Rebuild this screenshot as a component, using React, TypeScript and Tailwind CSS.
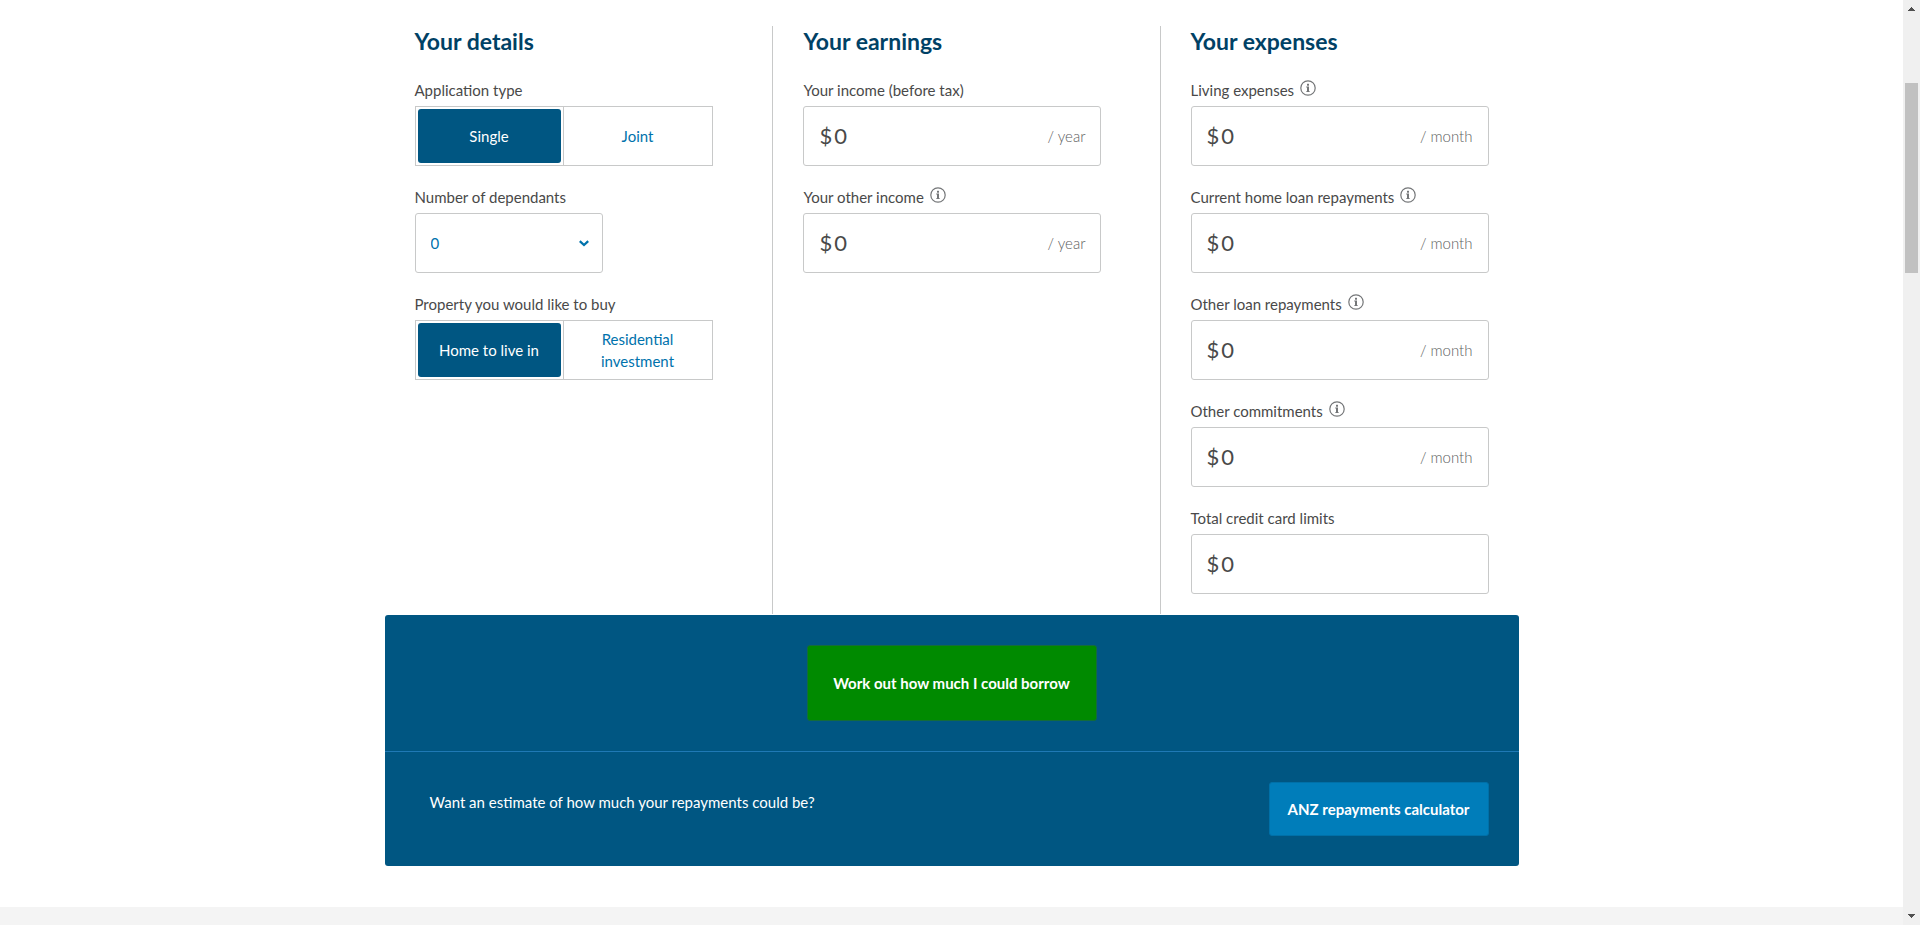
import { useState } from "react";
import type { ReactNode } from "react";

function InfoIcon() {
  return (
    <svg viewBox="0 0 16 16" className="size-4" fill="none" aria-hidden="true">
      <circle cx="8" cy="8" r="7.2" stroke="#747678" strokeWidth="1.2" />
      <rect x="7" y="3.8" width="2" height="1.9" fill="#747678" />
      <path d="M6.2 6.6H9v4.6h.8v.8H6.2v-.8H7V7.4h-.8z" fill="#747678" />
    </svg>
  );
}

function Column({ title, divided, children }: { title: string; divided?: boolean; children: ReactNode }) {
  return (
    <section className={divided ? "border-l border-[#c8c9c9] px-[30px] pb-5" : "px-[30px] pb-5"}>
      <h2 className="mb-[22px] text-[23px] leading-[30px] font-bold text-[#004165]">{title}</h2>
      <div className="flex max-w-[298px] flex-col gap-[19px]">{children}</div>
    </section>
  );
}

function MoneyField({ id, label, unit, info }: { id: string; label: string; unit?: string; info?: boolean }) {
  const [value, setValue] = useState("0");
  return (
    <div>
      <div className="mb-1 flex h-6 items-center gap-1.5">
        <label htmlFor={id}>{label}</label>
        {info && (
          <button type="button" aria-label={"About " + label} className="pb-1">
            <InfoIcon />
          </button>
        )}
      </div>
      <div className="flex h-[60px] items-center rounded-[3px] border border-[#c8c9c9] px-[15px]">
        <span className="mr-0.5 text-[22px]">$</span>
        <input
          id={id}
          inputMode="numeric"
          value={value}
          onChange={(e) => setValue(e.target.value)}
          className="min-w-0 flex-1 text-[22px] outline-none"
        />
        {unit && <span className="font-light text-[#5c5e60]">/ {unit}</span>}
      </div>
    </div>
  );
}

function Segmented({ name, label, options }: { name: string; label: string; options: string[] }) {
  const [picked, setPicked] = useState(options[0]);
  return (
    <div role="radiogroup" aria-labelledby={name + "-label"}>
      <div id={name + "-label"} className="mb-1 h-6 leading-6">
        {label}
      </div>
      <div className="grid min-h-[60px] grid-cols-2 divide-x divide-[#c8c9c9] border border-[#c8c9c9]">
        {options.map((option) => (
          <label key={option} className="relative flex cursor-pointer p-0.5">
            <input
              type="radio"
              name={name}
              checked={picked === option}
              onChange={() => setPicked(option)}
              className="peer sr-only"
            />
            <span className="flex flex-1 items-center justify-center rounded-[3px] px-4 text-center leading-[22px] text-[#0072ac] peer-checked:bg-[#005682] peer-checked:text-white">
              {option}
            </span>
          </label>
        ))}
      </div>
    </div>
  );
}

function Dependants() {
  return (
    <div>
      <label htmlFor="dependants" className="mb-1 block h-6 leading-6">
        Number of dependants
      </label>
      <div className="grid h-[60px] w-[188px] items-center rounded-[3px] border border-[#c8c9c9]">
        <select
          id="dependants"
          defaultValue="0"
          className="col-start-1 row-start-1 h-full appearance-none px-[15px] text-[#0072ac] outline-none"
        >
          <option>0</option>
          <option>1</option>
          <option>2</option>
          <option>3</option>
          <option>4</option>
        </select>
        <svg
          viewBox="0 0 10 7"
          className="pointer-events-none col-start-1 row-start-1 mr-[13px] h-[7px] w-2.5 justify-self-end"
          fill="none"
          stroke="#0072ac"
          strokeWidth="2.2"
          aria-hidden="true"
        >
          <path d="M.8 1.1 5 5.1l4.2-4" />
        </svg>
      </div>
    </div>
  );
}

function ScrollRail() {
  return (
    <div aria-hidden="true" className="sticky top-0 flex h-screen w-[17px] shrink-0 flex-col items-center bg-[#f0f0f0]">
      <svg viewBox="0 0 7 4" className="mt-[7px] h-1 w-[7px]" fill="#505050" shapeRendering="crispEdges">
        <path d="M3 0h1v1h1v1h1v1h1v1H0V3h1V2h1V1h1z" />
      </svg>
      <div className="mt-[72px] h-[190px] w-[13px] bg-[#c1c1c1]" />
      <svg viewBox="0 0 7 4" className="mt-auto mb-[7px] h-1 w-[7px]" fill="#505050" shapeRendering="crispEdges">
        <path d="M0 0h7v1H6v1H5v1H4v1H3V3H2V2H1V1H0z" />
      </svg>
    </div>
  );
}

export default function App() {
  return (
    <div className="flex bg-white font-['Lato',sans-serif] text-[15px] leading-6 text-[#494949]">
      <div className="flex min-h-screen flex-1 flex-col pt-[26px]">
        <main className="mx-auto mb-[41px] w-full max-w-[1134px]">
          <form onSubmit={(e) => e.preventDefault()}>
            <div className="mb-px grid grid-cols-[389fr_388fr_357fr]">
              <Column title="Your details">
                <Segmented name="application" label="Application type" options={["Single", "Joint"]} />
                <Dependants />
                <Segmented
                  name="property"
                  label="Property you would like to buy"
                  options={["Home to live in", "Residential investment"]}
                />
              </Column>
              <Column title="Your earnings" divided>
                <MoneyField id="income" label="Your income (before tax)" unit="year" />
                <MoneyField id="other-income" label="Your other income" unit="year" info />
              </Column>
              <Column title="Your expenses" divided>
                <MoneyField id="living" label="Living expenses" unit="month" info />
                <MoneyField id="home-loan" label="Current home loan repayments" unit="month" info />
                <MoneyField id="other-loan" label="Other loan repayments" unit="month" info />
                <MoneyField id="commitments" label="Other commitments" unit="month" info />
                <MoneyField id="cards" label="Total credit card limits" />
              </Column>
            </div>

            <div className="rounded-[3px] bg-[#005682] text-white">
              <div className="flex justify-center border-b border-[#1f79b5] py-[30px]">
                <button
                  type="submit"
                  className="h-[76px] w-[290px] rounded-[3px] border border-[#146b3c] bg-[#008a00] font-bold"
                >
                  Work out how much I could borrow
                </button>
              </div>
              <div className="flex items-start justify-between py-[30px] pr-[30px] pl-[45px]">
                <p className="pt-2">Want an estimate of how much your repayments could be?</p>
                <a
                  href="#repayments"
                  className="flex h-[54px] w-[220px] items-center justify-center rounded-[3px] border border-[#0070a8] bg-[#007dba] font-bold"
                >
                  ANZ repayments calculator
                </a>
              </div>
            </div>
          </form>
        </main>
        <div className="flex-1 bg-[#f4f4f4]" />
      </div>
      <ScrollRail />
    </div>
  );
}
